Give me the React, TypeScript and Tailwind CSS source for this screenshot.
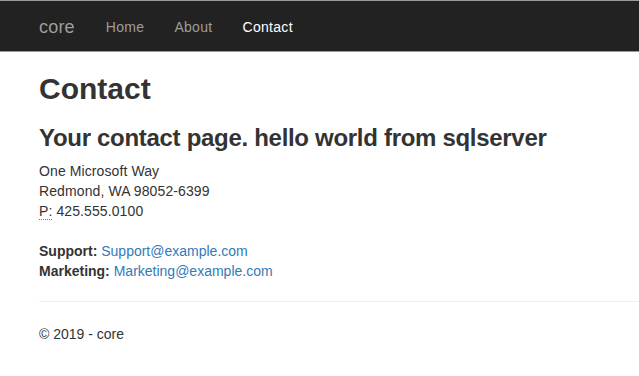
import React from 'react';

const navLinks = [
  { label: 'Home', active: false },
  { label: 'About', active: false },
  { label: 'Contact', active: true },
];

function Navbar() {
  return (
    <header className="border-t border-b border-[#9a9a9a] bg-[#222222]">
      <nav className="flex h-[50px] items-center pt-[1px] pl-[39px]">
        <a className="text-[18px] leading-[20px] tracking-[0.2px] text-[#9d9d9d]" href="#">
          core
        </a>
        <ul className="ml-[16px] flex">
          {navLinks.map((link) => (
            <li key={link.label}>
              <a
                href="#"
                className={`block px-[15px] text-[14px] leading-[20px] tracking-[0.3px] ${
                  link.active ? 'text-white' : 'text-[#9d9d9d]'
                }`}
              >
                {link.label}
              </a>
            </li>
          ))}
        </ul>
      </nav>
    </header>
  );
}

export default function App() {
  return (
    <div
      className="min-h-[376px] bg-white text-[14px] leading-[20px] text-[#333333]"
      style={{ fontFamily: '"Liberation Sans", Arial, sans-serif' }}
    >
      <Navbar />
      <main className="pt-[20px]">
        <div className="pl-[39px]">
          <h2 className="text-[30px] leading-[33px] font-bold">Contact</h2>
          <h3 className="mt-[20px] text-[24px] leading-[26px] font-bold tracking-[-0.3px]">
            Your contact page. hello world from sqlserver
          </h3>
          <address className="mt-[10px] not-italic tracking-[0.1px]">
            One Microsoft Way
            <br />
            Redmond, WA 98052-6399
            <br />
            <abbr title="Phone" className="cursor-help border-b border-dotted border-[#777] no-underline">
              P:
            </abbr>{' '}
            425.555.0100
          </address>
          <address className="mt-[20px] not-italic">
            <strong>Support:</strong>{' '}
            <a href="#" className="text-[#337ab7]">
              Support@example.com
            </a>
            <br />
            <strong>Marketing:</strong>{' '}
            <a href="#" className="text-[#337ab7]">
              Marketing@example.com
            </a>
          </address>
        </div>
        <hr className="mt-[20px] ml-[39px] border-t border-[#eeeeee]" />
        <footer className="mt-[22px] pl-[39px]">
          <p>© 2019 - core</p>
        </footer>
      </main>
    </div>
  );
}
